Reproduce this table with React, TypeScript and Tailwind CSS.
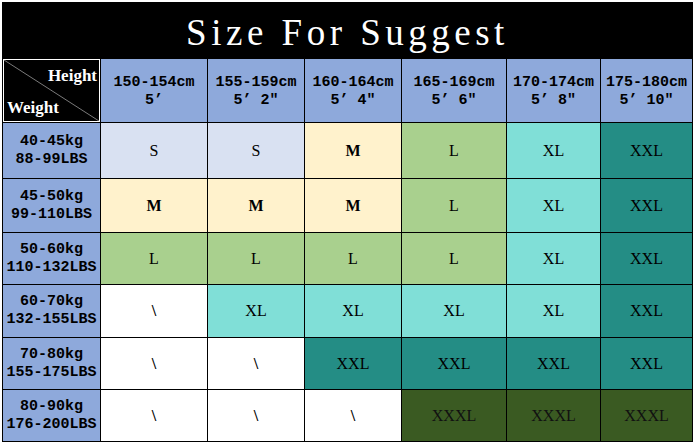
import React from "react";

type Size = "S" | "M" | "L" | "XL" | "XXL" | "XXXL" | "\\";

const heights = [
  { cm: "150-154cm", ft: "5’" },
  { cm: "155-159cm", ft: "5’ 2″" },
  { cm: "160-164cm", ft: "5’ 4″" },
  { cm: "165-169cm", ft: "5’ 6″" },
  { cm: "170-174cm", ft: "5’ 8″" },
  { cm: "175-180cm", ft: "5’ 10″" },
];

const rows: { kg: string; lbs: string; h: string; sizes: Size[] }[] = [
  { kg: "40-45kg", lbs: "88-99LBS", h: "h-[55px]", sizes: ["S", "S", "M", "L", "XL", "XXL"] },
  { kg: "45-50kg", lbs: "99-110LBS", h: "h-[53px]", sizes: ["M", "M", "M", "L", "XL", "XXL"] },
  { kg: "50-60kg", lbs: "110-132LBS", h: "h-[51px]", sizes: ["L", "L", "L", "L", "XL", "XXL"] },
  { kg: "60-70kg", lbs: "132-155LBS", h: "h-[52px]", sizes: ["\\", "XL", "XL", "XL", "XL", "XXL"] },
  { kg: "70-80kg", lbs: "155-175LBS", h: "h-[51px]", sizes: ["\\", "\\", "XXL", "XXL", "XXL", "XXL"] },
  { kg: "80-90kg", lbs: "176-200LBS", h: "h-[51px]", sizes: ["\\", "\\", "\\", "XXXL", "XXXL", "XXXL"] },
];

const sizeBg: Record<Size, string> = {
  S: "bg-[#d9e1f2]",
  M: "bg-[#fff2cc]",
  L: "bg-[#a9d08e]",
  XL: "bg-[#80dfd7]",
  XXL: "bg-[#248d85]",
  XXXL: "bg-[#3a5a22]",
  "\\": "bg-white",
};

const mono = "font-['Liberation_Mono',monospace] font-bold";
const serif = "font-['Liberation_Serif',serif]";

export default function App() {
  return (
    <div className="w-[695px] h-[443px] bg-white pt-[2px] pl-[2px]">
      <div className="w-[691px] bg-black px-px pb-px grid grid-cols-[97px_106px_96px_96px_104px_93px_91px] gap-px">
        {/* title */}
        <div className="col-span-7 h-[56px] flex items-center justify-center pt-[4px]">
          <span className={`${serif} text-white text-[37px] tracking-[4.5px] leading-none`}>
            Size For Suggest
          </span>
        </div>

        {/* corner */}
        <div className="relative h-[63px] border border-white bg-black overflow-hidden">
          <svg className="absolute inset-0" width="100%" height="100%" preserveAspectRatio="none" viewBox="0 0 95 61">
            <line x1="0" y1="0" x2="95" y2="61" stroke="#7a7a7a" strokeWidth="1" />
          </svg>
          <span className={`${serif} absolute right-[2px] top-[7px] text-white font-bold text-[17px] leading-none`}>
            Height
          </span>
          <span className={`${serif} absolute left-[3px] bottom-[5px] text-white font-bold text-[17px] leading-none`}>
            Weight
          </span>
        </div>
        {heights.map((h) => (
          <div
            key={h.cm}
            className={`${mono} bg-[#8ea9db] h-[63px] flex flex-col items-center justify-center pt-[3px] text-[15px] leading-[18px] text-black`}
          >
            <span>{h.cm}</span>
            <span>{h.ft}</span>
          </div>
        ))}

        {rows.map((r) => (
          <React.Fragment key={r.kg}>
            <div
              className={`${mono} ${r.h} bg-[#8ea9db] flex flex-col items-center justify-center text-[15px] leading-[18px] text-black`}
            >
              <span>{r.kg}</span>
              <span>{r.lbs}</span>
            </div>
            {r.sizes.map((s, i) => (
              <div
                key={i}
                className={`${serif} ${r.h} ${sizeBg[s]} flex items-center justify-center text-[16px] ${
                  s === "M" || s === "\\" ? "font-bold" : ""
                } ${s === "XXXL" ? "text-[#111]" : "text-black"}`}
              >
                {s}
              </div>
            ))}
          </React.Fragment>
        ))}
      </div>
    </div>
  );
}
